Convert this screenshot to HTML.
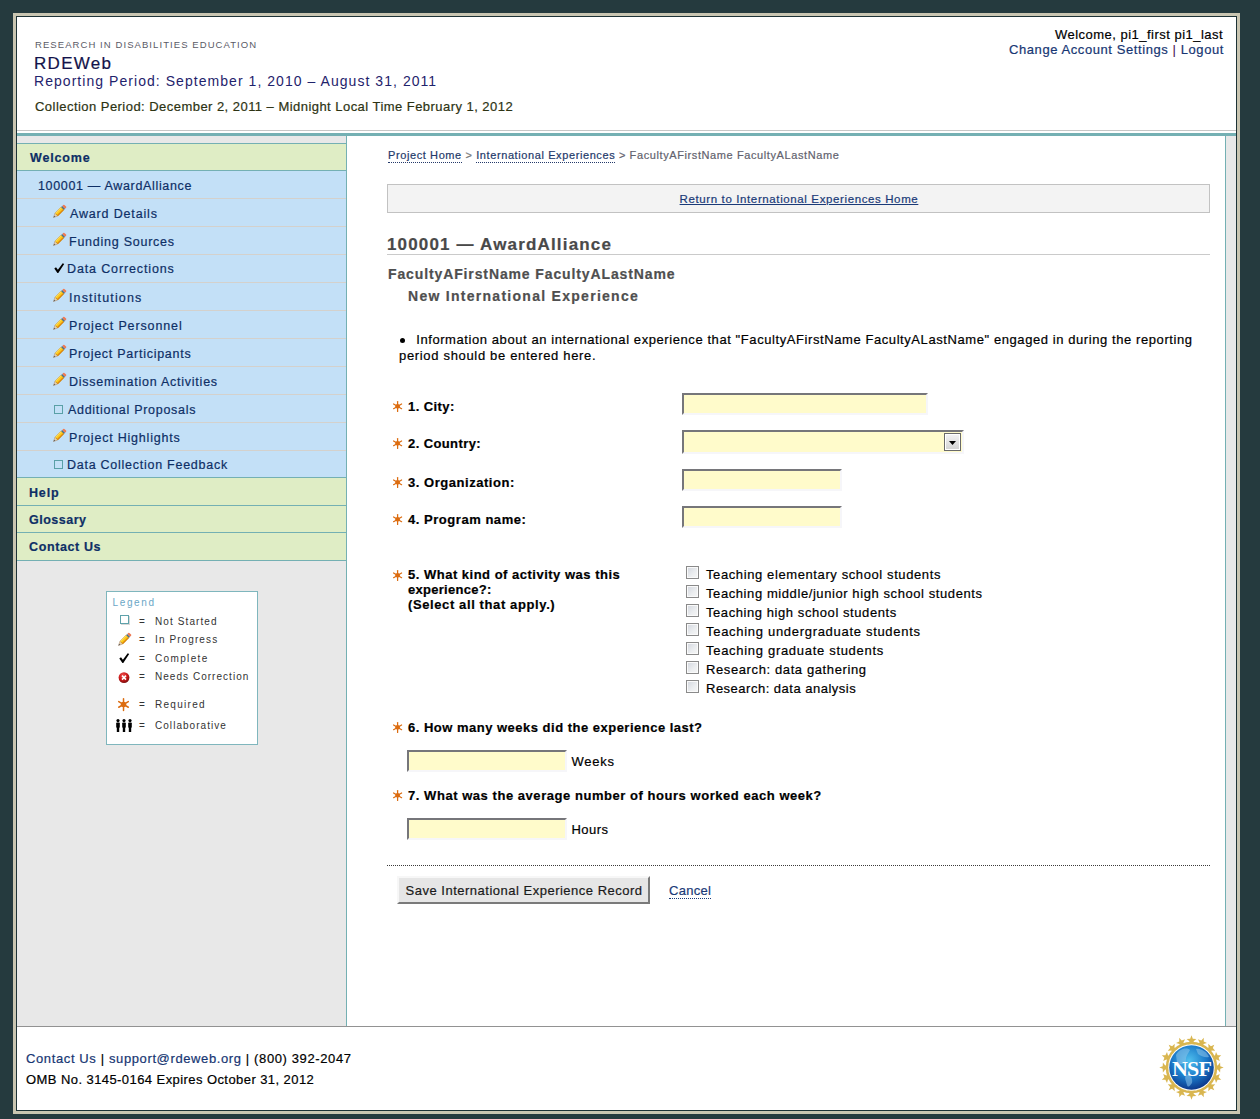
<!DOCTYPE html>
<html><head><meta charset="utf-8"><title>RDEWeb</title>
<style>
html,body{margin:0;padding:0}
body{width:1260px;height:1119px;overflow:hidden;background:#253a3e;position:relative;font-family:"Liberation Sans",sans-serif}
.a{position:absolute}
.t{position:absolute;white-space:nowrap;line-height:20px;-webkit-text-stroke-width:0.2px}
.dl{border-bottom:1px dotted #24396a;padding-bottom:1px}
.dl2{border-bottom:1px dotted #1a3a78}
.inp{position:absolute;box-sizing:border-box;background:#fffbcb;border-style:solid;border-width:2px;border-color:#76767a #f6f6f9 #f6f6f9 #76767a}
.sep{position:absolute;left:17px;width:329px;height:1px;background:#d4d1cc}
.tl{position:absolute;left:17px;width:329px;height:1px;background:#74b0b3}
.cb{position:absolute;width:13px;height:13px;box-sizing:border-box;border:1px solid #8a8a8a;background:linear-gradient(135deg,#d2d6de 0%,#eceef0 60%,#f6f6f6 100%);box-shadow:inset 0 0 0 1px #fafafa}
svg{position:absolute;overflow:visible}
</style></head><body>
<!-- frame -->
<div class="a" style="left:13px;top:13px;width:1227px;height:1101px;background:#c9c5b1"></div>
<div class="a" style="left:16px;top:16px;width:1221px;height:1095px;background:#1d3236"></div>
<div class="a" style="left:17px;top:17px;width:1219px;height:1093px;background:#fff"></div>

<!-- header lines -->
<div class="a" style="left:17px;top:130px;width:1219px;height:1px;background:#c6c6c6"></div>
<div class="a" style="left:17px;top:133px;width:1219px;height:3px;background:#74b0b3"></div>

<!-- sidebar -->
<div class="a" style="left:17px;top:136px;width:329px;height:890px;background:#e8e8e8"></div>
<div class="a" style="left:346px;top:136px;width:1px;height:890px;background:#74b0b3"></div>
<div class="tl" style="top:143px"></div>
<div class="a" style="left:17px;top:144px;width:329px;height:26px;background:#dfedc5"></div>
<div class="tl" style="top:170px"></div>
<div class="a" style="left:17px;top:171px;width:329px;height:306px;background:#c3e0f7"></div>
<div class="sep" style="top:198px"></div><div class="sep" style="top:226px"></div><div class="sep" style="top:254px"></div>
<div class="sep" style="top:282px"></div><div class="sep" style="top:310px"></div><div class="sep" style="top:338px"></div>
<div class="sep" style="top:366px"></div><div class="sep" style="top:394px"></div><div class="sep" style="top:422px"></div>
<div class="sep" style="top:450px"></div>
<div class="tl" style="top:477px"></div>
<div class="a" style="left:17px;top:478px;width:329px;height:82px;background:#dfedc5"></div>
<div class="tl" style="top:505px"></div>
<div class="tl" style="top:532px"></div>
<div class="tl" style="top:560px"></div>

<!-- nav icons -->
<svg class="a" style="left:53px;top:205px" width="13" height="13">
   <g transform="rotate(-45 6.5 6.5)">
    <polygon points="-2,6.5 2.2,4.5 2.2,8.5" fill="#ecd0a8" stroke="#9a7a5a" stroke-width="0.4"/>
    <polygon points="-2,6.5 -0.2,5.65 -0.2,7.35" fill="#555"/>
    <rect x="2.2" y="4.5" width="8.6" height="4" fill="#fccc1c" stroke="#a86a10" stroke-width="0.45"/>
    <rect x="2.2" y="7.3" width="8.6" height="1.2" fill="#e0860c"/>
    <rect x="2.2" y="4.5" width="8.6" height="0.8" fill="#fde07a"/>
    <rect x="10.8" y="4.5" width="1.6" height="4" fill="#4a7088"/>
    <rect x="12.4" y="4.5" width="2.2" height="4" rx="0.8" fill="#ee7a56"/>
   </g></svg>
<svg class="a" style="left:53px;top:233px" width="13" height="13">
   <g transform="rotate(-45 6.5 6.5)">
    <polygon points="-2,6.5 2.2,4.5 2.2,8.5" fill="#ecd0a8" stroke="#9a7a5a" stroke-width="0.4"/>
    <polygon points="-2,6.5 -0.2,5.65 -0.2,7.35" fill="#555"/>
    <rect x="2.2" y="4.5" width="8.6" height="4" fill="#fccc1c" stroke="#a86a10" stroke-width="0.45"/>
    <rect x="2.2" y="7.3" width="8.6" height="1.2" fill="#e0860c"/>
    <rect x="2.2" y="4.5" width="8.6" height="0.8" fill="#fde07a"/>
    <rect x="10.8" y="4.5" width="1.6" height="4" fill="#4a7088"/>
    <rect x="12.4" y="4.5" width="2.2" height="4" rx="0.8" fill="#ee7a56"/>
   </g></svg>
<svg class="a" style="left:54px;top:263px" width="11" height="10"><path d="M0.3,5.6 L2,4.3 L3.9,6.7 L8.7,0.2 L10.2,1.1 L4.3,10 L3.4,10 Z" fill="#000"/></svg>
<svg class="a" style="left:53px;top:289px" width="13" height="13">
   <g transform="rotate(-45 6.5 6.5)">
    <polygon points="-2,6.5 2.2,4.5 2.2,8.5" fill="#ecd0a8" stroke="#9a7a5a" stroke-width="0.4"/>
    <polygon points="-2,6.5 -0.2,5.65 -0.2,7.35" fill="#555"/>
    <rect x="2.2" y="4.5" width="8.6" height="4" fill="#fccc1c" stroke="#a86a10" stroke-width="0.45"/>
    <rect x="2.2" y="7.3" width="8.6" height="1.2" fill="#e0860c"/>
    <rect x="2.2" y="4.5" width="8.6" height="0.8" fill="#fde07a"/>
    <rect x="10.8" y="4.5" width="1.6" height="4" fill="#4a7088"/>
    <rect x="12.4" y="4.5" width="2.2" height="4" rx="0.8" fill="#ee7a56"/>
   </g></svg>
<svg class="a" style="left:53px;top:317px" width="13" height="13">
   <g transform="rotate(-45 6.5 6.5)">
    <polygon points="-2,6.5 2.2,4.5 2.2,8.5" fill="#ecd0a8" stroke="#9a7a5a" stroke-width="0.4"/>
    <polygon points="-2,6.5 -0.2,5.65 -0.2,7.35" fill="#555"/>
    <rect x="2.2" y="4.5" width="8.6" height="4" fill="#fccc1c" stroke="#a86a10" stroke-width="0.45"/>
    <rect x="2.2" y="7.3" width="8.6" height="1.2" fill="#e0860c"/>
    <rect x="2.2" y="4.5" width="8.6" height="0.8" fill="#fde07a"/>
    <rect x="10.8" y="4.5" width="1.6" height="4" fill="#4a7088"/>
    <rect x="12.4" y="4.5" width="2.2" height="4" rx="0.8" fill="#ee7a56"/>
   </g></svg>
<svg class="a" style="left:53px;top:345px" width="13" height="13">
   <g transform="rotate(-45 6.5 6.5)">
    <polygon points="-2,6.5 2.2,4.5 2.2,8.5" fill="#ecd0a8" stroke="#9a7a5a" stroke-width="0.4"/>
    <polygon points="-2,6.5 -0.2,5.65 -0.2,7.35" fill="#555"/>
    <rect x="2.2" y="4.5" width="8.6" height="4" fill="#fccc1c" stroke="#a86a10" stroke-width="0.45"/>
    <rect x="2.2" y="7.3" width="8.6" height="1.2" fill="#e0860c"/>
    <rect x="2.2" y="4.5" width="8.6" height="0.8" fill="#fde07a"/>
    <rect x="10.8" y="4.5" width="1.6" height="4" fill="#4a7088"/>
    <rect x="12.4" y="4.5" width="2.2" height="4" rx="0.8" fill="#ee7a56"/>
   </g></svg>
<svg class="a" style="left:53px;top:373px" width="13" height="13">
   <g transform="rotate(-45 6.5 6.5)">
    <polygon points="-2,6.5 2.2,4.5 2.2,8.5" fill="#ecd0a8" stroke="#9a7a5a" stroke-width="0.4"/>
    <polygon points="-2,6.5 -0.2,5.65 -0.2,7.35" fill="#555"/>
    <rect x="2.2" y="4.5" width="8.6" height="4" fill="#fccc1c" stroke="#a86a10" stroke-width="0.45"/>
    <rect x="2.2" y="7.3" width="8.6" height="1.2" fill="#e0860c"/>
    <rect x="2.2" y="4.5" width="8.6" height="0.8" fill="#fde07a"/>
    <rect x="10.8" y="4.5" width="1.6" height="4" fill="#4a7088"/>
    <rect x="12.4" y="4.5" width="2.2" height="4" rx="0.8" fill="#ee7a56"/>
   </g></svg>
<div class="a" style="left:54px;top:405px;width:7px;height:7px;border:1px solid #5aa0a7"></div>
<svg class="a" style="left:53px;top:429px" width="13" height="13">
   <g transform="rotate(-45 6.5 6.5)">
    <polygon points="-2,6.5 2.2,4.5 2.2,8.5" fill="#ecd0a8" stroke="#9a7a5a" stroke-width="0.4"/>
    <polygon points="-2,6.5 -0.2,5.65 -0.2,7.35" fill="#555"/>
    <rect x="2.2" y="4.5" width="8.6" height="4" fill="#fccc1c" stroke="#a86a10" stroke-width="0.45"/>
    <rect x="2.2" y="7.3" width="8.6" height="1.2" fill="#e0860c"/>
    <rect x="2.2" y="4.5" width="8.6" height="0.8" fill="#fde07a"/>
    <rect x="10.8" y="4.5" width="1.6" height="4" fill="#4a7088"/>
    <rect x="12.4" y="4.5" width="2.2" height="4" rx="0.8" fill="#ee7a56"/>
   </g></svg>
<div class="a" style="left:54px;top:460px;width:7px;height:7px;border:1px solid #5aa0a7"></div>

<!-- legend -->
<div class="a" style="left:106px;top:591px;width:150px;height:152px;background:#fff;border:1px solid #7fb6bd"></div>
<div class="a" style="left:120px;top:615px;width:7px;height:7px;border:1px solid #5ea2ab;box-shadow:1px 1px 0 #d8d8d8"></div>
<svg class="a" style="left:118px;top:633px" width="13" height="13">
   <g transform="rotate(-45 6.5 6.5)">
    <polygon points="-2,6.5 2.2,4.5 2.2,8.5" fill="#ecd0a8" stroke="#9a7a5a" stroke-width="0.4"/>
    <polygon points="-2,6.5 -0.2,5.65 -0.2,7.35" fill="#555"/>
    <rect x="2.2" y="4.5" width="8.6" height="4" fill="#fccc1c" stroke="#a86a10" stroke-width="0.45"/>
    <rect x="2.2" y="7.3" width="8.6" height="1.2" fill="#e0860c"/>
    <rect x="2.2" y="4.5" width="8.6" height="0.8" fill="#fde07a"/>
    <rect x="10.8" y="4.5" width="1.6" height="4" fill="#4a7088"/>
    <rect x="12.4" y="4.5" width="2.2" height="4" rx="0.8" fill="#ee7a56"/>
   </g></svg>
<svg class="a" style="left:119px;top:653px" width="11" height="10"><path d="M0.3,5.6 L2,4.3 L3.9,6.7 L8.7,0.2 L10.2,1.1 L4.3,10 L3.4,10 Z" fill="#000"/></svg>
<svg class="a" style="left:118px;top:672px" width="12" height="12">
 <defs><radialGradient id="rg" cx="0.4" cy="0.3" r="0.7"><stop offset="0" stop-color="#f05050"/><stop offset="0.6" stop-color="#c81818"/><stop offset="1" stop-color="#801010"/></radialGradient></defs>
 <circle cx="6" cy="5.6" r="5.4" fill="url(#rg)"/>
 <path d="M4,3.6 L8,7.6 M8,3.6 L4,7.6" stroke="#fff" stroke-width="1.5"/>
</svg>
<svg class="a" style="left:118px;top:698px" width="12" height="12"><g transform="scale(1.2)">
   <g stroke="#dc6c10" stroke-width="1.25" stroke-linecap="round"><line x1="4.6" y1="0.6" x2="4.6" y2="10.4"/><line x1="0.6" y1="3" x2="8.6" y2="7.7"/><line x1="0.6" y1="7.7" x2="8.6" y2="3"/></g>
   <circle cx="4.6" cy="5.35" r="2.3" fill="#dc6c10"/></g></svg>
<svg class="a" style="left:115px;top:719px" width="18" height="14">
 <g fill="#000">
  <circle cx="3" cy="1.6" r="1.6"/><rect x="1.2" y="3.4" width="3.6" height="5.4" rx="0.8"/><rect x="1.8" y="8" width="2.4" height="5"/>
  <circle cx="9" cy="1.6" r="1.6"/><rect x="7.2" y="3.4" width="3.6" height="5.4" rx="0.8"/><rect x="7.8" y="8" width="2.4" height="5"/>
  <circle cx="15" cy="1.6" r="1.6"/><rect x="13.2" y="3.4" width="3.6" height="5.4" rx="0.8"/><rect x="13.8" y="8" width="2.4" height="5"/>
 </g>
</svg>

<!-- right gutter -->
<div class="a" style="left:1225px;top:136px;width:1px;height:890px;background:#74b0b3"></div>
<div class="a" style="left:1226px;top:136px;width:10px;height:890px;background:#e8e8e8"></div>
<!-- footer line -->
<div class="a" style="left:17px;top:1026px;width:1219px;height:1px;background:#929292"></div>

<!-- content boxes -->
<div class="a" style="left:387px;top:184px;width:821px;height:27px;background:#f3f3f3;border:1px solid #c2c2c2"></div>
<div class="a" style="left:387px;top:254px;width:823px;height:1px;background:#cacaca"></div>

<!-- stars -->
<svg class="a" style="left:393px;top:401px" width="10" height="10">
   <g stroke="#dc6c10" stroke-width="1.25" stroke-linecap="round"><line x1="4.6" y1="0.6" x2="4.6" y2="10.4"/><line x1="0.6" y1="3" x2="8.6" y2="7.7"/><line x1="0.6" y1="7.7" x2="8.6" y2="3"/></g>
   <circle cx="4.6" cy="5.35" r="2.3" fill="#dc6c10"/></svg>
<svg class="a" style="left:393px;top:438px" width="10" height="10">
   <g stroke="#dc6c10" stroke-width="1.25" stroke-linecap="round"><line x1="4.6" y1="0.6" x2="4.6" y2="10.4"/><line x1="0.6" y1="3" x2="8.6" y2="7.7"/><line x1="0.6" y1="7.7" x2="8.6" y2="3"/></g>
   <circle cx="4.6" cy="5.35" r="2.3" fill="#dc6c10"/></svg>
<svg class="a" style="left:393px;top:477px" width="10" height="10">
   <g stroke="#dc6c10" stroke-width="1.25" stroke-linecap="round"><line x1="4.6" y1="0.6" x2="4.6" y2="10.4"/><line x1="0.6" y1="3" x2="8.6" y2="7.7"/><line x1="0.6" y1="7.7" x2="8.6" y2="3"/></g>
   <circle cx="4.6" cy="5.35" r="2.3" fill="#dc6c10"/></svg>
<svg class="a" style="left:393px;top:514px" width="10" height="10">
   <g stroke="#dc6c10" stroke-width="1.25" stroke-linecap="round"><line x1="4.6" y1="0.6" x2="4.6" y2="10.4"/><line x1="0.6" y1="3" x2="8.6" y2="7.7"/><line x1="0.6" y1="7.7" x2="8.6" y2="3"/></g>
   <circle cx="4.6" cy="5.35" r="2.3" fill="#dc6c10"/></svg>
<svg class="a" style="left:393px;top:570px" width="10" height="10">
   <g stroke="#dc6c10" stroke-width="1.25" stroke-linecap="round"><line x1="4.6" y1="0.6" x2="4.6" y2="10.4"/><line x1="0.6" y1="3" x2="8.6" y2="7.7"/><line x1="0.6" y1="7.7" x2="8.6" y2="3"/></g>
   <circle cx="4.6" cy="5.35" r="2.3" fill="#dc6c10"/></svg>
<svg class="a" style="left:393px;top:722px" width="10" height="10">
   <g stroke="#dc6c10" stroke-width="1.25" stroke-linecap="round"><line x1="4.6" y1="0.6" x2="4.6" y2="10.4"/><line x1="0.6" y1="3" x2="8.6" y2="7.7"/><line x1="0.6" y1="7.7" x2="8.6" y2="3"/></g>
   <circle cx="4.6" cy="5.35" r="2.3" fill="#dc6c10"/></svg>
<svg class="a" style="left:393px;top:790px" width="10" height="10">
   <g stroke="#dc6c10" stroke-width="1.25" stroke-linecap="round"><line x1="4.6" y1="0.6" x2="4.6" y2="10.4"/><line x1="0.6" y1="3" x2="8.6" y2="7.7"/><line x1="0.6" y1="7.7" x2="8.6" y2="3"/></g>
   <circle cx="4.6" cy="5.35" r="2.3" fill="#dc6c10"/></svg>

<!-- inputs -->
<div class="inp" style="left:682px;top:393px;width:246px;height:22px"></div>
<div class="inp" style="left:682px;top:430px;width:282px;height:24px"></div>
<div class="a" style="left:944px;top:433px;width:15px;height:16px;border:1px solid #6a6a6a;box-sizing:content-box;background:#fff">
 <div class="a" style="left:1px;top:1px;width:13px;height:14px;background:linear-gradient(#f2f2f2,#d4d4d4)"></div>
 <svg class="a" style="left:4px;top:7px" width="7" height="4"><polygon points="0,0 7,0 3.5,4" fill="#000"/></svg>
</div>
<div class="inp" style="left:682px;top:469px;width:160px;height:22px"></div>
<div class="inp" style="left:682px;top:506px;width:160px;height:22px"></div>
<div class="inp" style="left:407px;top:750px;width:160px;height:22px"></div>
<div class="inp" style="left:407px;top:818px;width:160px;height:22px"></div>

<!-- checkboxes -->
<div class="cb" style="left:686px;top:566px"></div>
<div class="cb" style="left:686px;top:585px"></div>
<div class="cb" style="left:686px;top:604px"></div>
<div class="cb" style="left:686px;top:623px"></div>
<div class="cb" style="left:686px;top:642px"></div>
<div class="cb" style="left:686px;top:661px"></div>
<div class="cb" style="left:686px;top:680px"></div>

<!-- bullet -->
<div class="a" style="left:400px;top:338px;width:5px;height:5px;border-radius:50%;background:#000"></div>

<!-- dotted separator -->
<div class="a" style="left:387px;top:865px;width:823px;height:1px;background:repeating-linear-gradient(90deg,#3a3a3a 0 1px,transparent 1px 2px)"></div>

<!-- button -->
<div class="a" style="left:397px;top:876px;width:253px;height:28px;box-sizing:border-box;background:#e6e6e6;border:2px solid;border-color:#f7f7f7 #7a7a7a #7a7a7a #f7f7f7"></div>

<!-- NSF logo -->
<svg class="a" style="left:1159px;top:1035px" width="65" height="65" viewBox="0 0 65 65">
 <defs>
  <radialGradient id="globe" cx="0.45" cy="0.35" r="0.7">
   <stop offset="0" stop-color="#4fc0ee"/><stop offset="0.55" stop-color="#1a78c8"/><stop offset="1" stop-color="#0a2c80"/>
  </radialGradient>
 </defs>
 <g id="stars" fill="#d9b650">
<polygon points="32.5,0.3 33.8,3.7 37.4,3.9 34.6,6.2 35.6,9.7 32.5,7.7 29.4,9.7 30.4,6.2 27.6,3.9 31.2,3.7"/>
<polygon points="44.8,2.8 44.7,6.4 48.0,8.0 44.5,9.0 44.0,12.6 42.0,9.6 38.4,10.3 40.6,7.4 38.9,4.2 42.3,5.4"/>
<polygon points="55.3,9.7 53.8,13.1 56.2,15.8 52.6,15.4 50.8,18.5 50.0,15.0 46.5,14.2 49.6,12.4 49.2,8.8 51.9,11.2"/>
<polygon points="62.2,20.2 59.6,22.7 60.8,26.1 57.6,24.4 54.7,26.6 55.4,23.0 52.4,21.0 56.0,20.5 57.0,17.0 58.6,20.3"/>
<polygon points="64.7,32.5 61.3,33.8 61.1,37.4 58.8,34.6 55.3,35.6 57.3,32.5 55.3,29.4 58.8,30.4 61.1,27.6 61.3,31.2"/>
<polygon points="62.2,44.8 58.6,44.7 57.0,48.0 56.0,44.5 52.4,44.0 55.4,42.0 54.7,38.4 57.6,40.6 60.8,38.9 59.6,42.3"/>
<polygon points="55.3,55.3 51.9,53.8 49.2,56.2 49.6,52.6 46.5,50.8 50.0,50.0 50.8,46.5 52.6,49.6 56.2,49.2 53.8,51.9"/>
<polygon points="44.8,62.2 42.3,59.6 38.9,60.8 40.6,57.6 38.4,54.7 42.0,55.4 44.0,52.4 44.5,56.0 48.0,57.0 44.7,58.6"/>
<polygon points="32.5,64.7 31.2,61.3 27.6,61.1 30.4,58.8 29.4,55.3 32.5,57.3 35.6,55.3 34.6,58.8 37.4,61.1 33.8,61.3"/>
<polygon points="20.2,62.2 20.3,58.6 17.0,57.0 20.5,56.0 21.0,52.4 23.0,55.4 26.6,54.7 24.4,57.6 26.1,60.8 22.7,59.6"/>
<polygon points="9.7,55.3 11.2,51.9 8.8,49.2 12.4,49.6 14.2,46.5 15.0,50.0 18.5,50.8 15.4,52.6 15.8,56.2 13.1,53.8"/>
<polygon points="2.8,44.8 5.4,42.3 4.2,38.9 7.4,40.6 10.3,38.4 9.6,42.0 12.6,44.0 9.0,44.5 8.0,48.0 6.4,44.7"/>
<polygon points="0.3,32.5 3.7,31.2 3.9,27.6 6.2,30.4 9.7,29.4 7.7,32.5 9.7,35.6 6.2,34.6 3.9,37.4 3.7,33.8"/>
<polygon points="2.8,20.2 6.4,20.3 8.0,17.0 9.0,20.5 12.6,21.0 9.6,23.0 10.3,26.6 7.4,24.4 4.2,26.1 5.4,22.7"/>
<polygon points="9.7,9.7 13.1,11.2 15.8,8.8 15.4,12.4 18.5,14.2 15.0,15.0 14.2,18.5 12.4,15.4 8.8,15.8 11.2,13.1"/>
<polygon points="20.2,2.8 22.7,5.4 26.1,4.2 24.4,7.4 26.6,10.3 23.0,9.6 21.0,12.6 20.5,9.0 17.0,8.0 20.3,6.4"/>
 </g>
 <circle cx="32.5" cy="32.5" r="24.5" fill="none" stroke="#d9b650" stroke-width="2.5"/>
 <circle cx="32.5" cy="32.5" r="22.3" fill="url(#globe)"/>
 <g fill="#8cc4ea" opacity="0.55">
  <path d="M17,20 C20,14 27,12 31,15 C29,19 26,22 27,27 C24,30 20,30 18,27 Z"/>
  <path d="M37,14 C42,13 48,17 50,22 C46,23 42,21 39,19 Z"/>
  <path d="M27,40 C31,39 34,43 33,48 C31,51 29,53 28,50 C27,46 25,43 27,40 Z"/>
 </g>
 <text x="32.5" y="40.5" text-anchor="middle" font-family="Liberation Serif" font-weight="bold" font-size="22" fill="#fff" letter-spacing="-0.8">NSF</text>
</svg>

<div class="t" id="h1" style="left:35.00px;top:35px;font-size:9.5px;color:#5a5a66;letter-spacing:1.076px;-webkit-text-stroke-width:0">RESEARCH IN DISABILITIES EDUCATION</div>
<div class="t" id="h2" style="left:34.00px;top:54px;font-size:17px;color:#13134a;letter-spacing:1.300px">RDEWeb</div>
<div class="t" id="h3" style="left:34.00px;top:71px;font-size:14px;color:#1f236c;letter-spacing:1.048px;-webkit-text-stroke-width:0">Reporting Period: September 1, 2010 &ndash; August 31, 2011</div>
<div class="t" id="h4" style="left:35.00px;top:97px;font-size:13px;color:#2d3313;letter-spacing:0.459px">Collection Period: December 2, 2011 &ndash; Midnight Local Time February 1, 2012</div>
<div class="t" id="h5" style="left:1055.00px;top:25px;font-size:13px;color:#000;letter-spacing:0.481px">Welcome, pi1_first pi1_last</div>
<div class="t" id="h6" style="left:1009.00px;top:40px;font-size:13px;color:#173673;letter-spacing:0.581px"><span style="color:#173673">Change Account Settings</span> <span style="color:#40104a;-webkit-text-stroke-width:0">|</span> <span style="color:#173673">Logout</span></div>
<div class="t" id="n0" style="left:30.00px;top:148px;font-size:12.5px;color:#0e2f66;letter-spacing:0.833px;font-weight:bold">Welcome</div>
<div class="t" id="n1" style="left:38.00px;top:176px;font-size:12.5px;color:#0e2f66;letter-spacing:0.667px">100001 &mdash; AwardAlliance</div>
<div class="t" id="n2" style="left:70.00px;top:204px;font-size:12.5px;color:#0e2f66;letter-spacing:0.833px">Award Details</div>
<div class="t" id="n3" style="left:69.00px;top:232px;font-size:12.5px;color:#0e2f66;letter-spacing:0.750px">Funding Sources</div>
<div class="t" id="n4" style="left:67.00px;top:259px;font-size:12.5px;color:#0e2f66;letter-spacing:0.867px">Data Corrections</div>
<div class="t" id="n5" style="left:69.00px;top:288px;font-size:12.5px;color:#0e2f66;letter-spacing:1.136px">Institutions</div>
<div class="t" id="n6" style="left:69.00px;top:316px;font-size:12.5px;color:#0e2f66;letter-spacing:0.875px">Project Personnel</div>
<div class="t" id="n7" style="left:69.00px;top:344px;font-size:12.5px;color:#0e2f66;letter-spacing:0.737px">Project Participants</div>
<div class="t" id="n8" style="left:69.00px;top:372px;font-size:12.5px;color:#0e2f66;letter-spacing:0.761px">Dissemination Activities</div>
<div class="t" id="n9" style="left:68.00px;top:400px;font-size:12.5px;color:#0e2f66;letter-spacing:0.711px">Additional Proposals</div>
<div class="t" id="n10" style="left:69.00px;top:428px;font-size:12.5px;color:#0e2f66;letter-spacing:0.794px">Project Highlights</div>
<div class="t" id="n11" style="left:67.00px;top:455px;font-size:12.5px;color:#0e2f66;letter-spacing:0.739px">Data Collection Feedback</div>
<div class="t" id="g1" style="left:29.00px;top:483px;font-size:12.5px;color:#0e2f66;letter-spacing:0.833px;font-weight:bold">Help</div>
<div class="t" id="g2" style="left:29.00px;top:510px;font-size:12.5px;color:#0e2f66;letter-spacing:0.500px;font-weight:bold">Glossary</div>
<div class="t" id="g3" style="left:29.00px;top:537px;font-size:12.5px;color:#0e2f66;letter-spacing:0.611px;font-weight:bold">Contact Us</div>
<div class="t" id="c1" style="left:388.00px;top:145px;font-size:11px;color:#24396a;letter-spacing:0.599px"><span class="dl" style="color:#24396a">Project Home</span> <span style="color:#777">&gt;</span> <span class="dl" style="color:#24396a">International Experiences</span> <span style="color:#62626e">&gt; FacultyAFirstName FacultyALastName</span></div>
<div class="t" id="c2" style="left:679.60px;top:189px;font-size:11.5px;color:#1a3a78;letter-spacing:0.615px"><span style="text-decoration:underline;color:#1a3a78">Return to International Experiences Home</span></div>
<div class="t" id="c3" style="left:387.00px;top:235px;font-size:17px;color:#494949;letter-spacing:1.167px;font-weight:bold">100001 &mdash; AwardAlliance</div>
<div class="t" id="c4" style="left:388.00px;top:264px;font-size:14px;color:#4f4f4f;letter-spacing:0.879px;font-weight:bold">FacultyAFirstName FacultyALastName</div>
<div class="t" id="c5" style="left:408.00px;top:286px;font-size:14px;color:#4f4f4f;letter-spacing:1.278px;font-weight:bold">New International Experience</div>
<div class="t" id="c6" style="left:416.20px;top:330px;font-size:13px;color:#000;letter-spacing:0.581px">Information about an international experience that &quot;FacultyAFirstName FacultyALastName&quot; engaged in during the reporting</div>
<div class="t" id="c7" style="left:399.00px;top:346px;font-size:13px;color:#000;letter-spacing:0.672px">period should be entered here.</div>
<div class="t" id="q1" style="left:408.00px;top:397px;font-size:13px;color:#000;letter-spacing:0.429px;font-weight:bold">1. City:</div>
<div class="t" id="q2" style="left:408.00px;top:434px;font-size:13px;color:#000;letter-spacing:0.400px;font-weight:bold">2. Country:</div>
<div class="t" id="q3" style="left:408.00px;top:473px;font-size:13px;color:#000;letter-spacing:0.533px;font-weight:bold">3. Organization:</div>
<div class="t" id="q4" style="left:408.00px;top:510px;font-size:13px;color:#000;letter-spacing:0.533px;font-weight:bold">4. Program name:</div>
<div class="t" id="q5a" style="left:408.00px;top:565px;font-size:13px;color:#000;letter-spacing:0.500px;font-weight:bold">5. What kind of activity was this</div>
<div class="t" id="q5b" style="left:408.00px;top:580px;font-size:13px;color:#000;letter-spacing:0.273px;font-weight:bold">experience?:</div>
<div class="t" id="q5c" style="left:408.00px;top:595px;font-size:13px;color:#000;letter-spacing:0.609px;font-weight:bold">(Select all that apply.)</div>
<div class="t" id="o0" style="left:706.00px;top:565px;font-size:13px;color:#000;letter-spacing:0.603px">Teaching elementary school students</div>
<div class="t" id="o1" style="left:706.00px;top:584px;font-size:13px;color:#000;letter-spacing:0.583px">Teaching middle/junior high school students</div>
<div class="t" id="o2" style="left:706.00px;top:603px;font-size:13px;color:#000;letter-spacing:0.571px">Teaching high school students</div>
<div class="t" id="o3" style="left:706.00px;top:622px;font-size:13px;color:#000;letter-spacing:0.700px">Teaching undergraduate students</div>
<div class="t" id="o4" style="left:706.00px;top:641px;font-size:13px;color:#000;letter-spacing:0.700px">Teaching graduate students</div>
<div class="t" id="o5" style="left:706.00px;top:660px;font-size:13px;color:#000;letter-spacing:0.609px">Research: data gathering</div>
<div class="t" id="o6" style="left:706.00px;top:679px;font-size:13px;color:#000;letter-spacing:0.500px">Research: data analysis</div>
<div class="t" id="q6" style="left:408.00px;top:718px;font-size:13px;color:#000;letter-spacing:0.493px;font-weight:bold">6. How many weeks did the experience last?</div>
<div class="t" id="w1" style="left:571.40px;top:752px;font-size:13px;color:#000;letter-spacing:0.750px">Weeks</div>
<div class="t" id="q7" style="left:408.00px;top:786px;font-size:13px;color:#000;letter-spacing:0.543px;font-weight:bold">7. What was the average number of hours worked each week?</div>
<div class="t" id="w2" style="left:571.40px;top:820px;font-size:13px;color:#000;letter-spacing:0.500px">Hours</div>
<div class="t" id="bt" style="left:405.60px;top:881px;font-size:13px;color:#1a1a1a;letter-spacing:0.500px">Save International Experience Record</div>
<div class="t" id="cn" style="left:669.00px;top:881px;font-size:13px;color:#1a3a78;letter-spacing:0.300px"><span class="dl2">Cancel</span></div>
<div class="t" id="f1" style="left:26.00px;top:1049px;font-size:13px;color:#000;letter-spacing:0.617px"><span style="color:#173673">Contact Us</span> | <span style="color:#173673">support@rdeweb.org</span> | (800) 392-2047</div>
<div class="t" id="f2" style="left:26.00px;top:1070px;font-size:13px;color:#000;letter-spacing:0.427px">OMB No. 3145-0164 Expires October 31, 2012</div>
<div class="t" id="l0" style="left:112.60px;top:593px;font-size:10px;color:#6aa6c6;letter-spacing:1.600px;-webkit-text-stroke-width:0">Legend</div>
<div class="t" id="l1" style="left:155.00px;top:612px;font-size:10px;color:#333;letter-spacing:1.100px;-webkit-text-stroke-width:0">Not Started</div>
<div class="t" id="e1" style="left:139.00px;top:612px;font-size:10px;color:#333;letter-spacing:0.000px;-webkit-text-stroke-width:0">=</div>
<div class="t" id="l2" style="left:155.00px;top:630px;font-size:10px;color:#333;letter-spacing:1.100px;-webkit-text-stroke-width:0">In Progress</div>
<div class="t" id="e2" style="left:139.00px;top:630px;font-size:10px;color:#333;letter-spacing:0.000px;-webkit-text-stroke-width:0">=</div>
<div class="t" id="l3" style="left:155.00px;top:649px;font-size:10px;color:#333;letter-spacing:1.357px;-webkit-text-stroke-width:0">Complete</div>
<div class="t" id="e3" style="left:139.00px;top:649px;font-size:10px;color:#333;letter-spacing:0.000px;-webkit-text-stroke-width:0">=</div>
<div class="t" id="l4" style="left:155.00px;top:667px;font-size:10px;color:#333;letter-spacing:1.033px;-webkit-text-stroke-width:0">Needs Correction</div>
<div class="t" id="e4" style="left:139.00px;top:667px;font-size:10px;color:#333;letter-spacing:0.000px;-webkit-text-stroke-width:0">=</div>
<div class="t" id="l5" style="left:155.00px;top:695px;font-size:10px;color:#333;letter-spacing:1.286px;-webkit-text-stroke-width:0">Required</div>
<div class="t" id="e5" style="left:139.00px;top:695px;font-size:10px;color:#333;letter-spacing:0.000px;-webkit-text-stroke-width:0">=</div>
<div class="t" id="l6" style="left:155.00px;top:716px;font-size:10px;color:#333;letter-spacing:1.042px;-webkit-text-stroke-width:0">Collaborative</div>
<div class="t" id="e6" style="left:139.00px;top:716px;font-size:10px;color:#333;letter-spacing:0.000px;-webkit-text-stroke-width:0">=</div>
</body></html>
